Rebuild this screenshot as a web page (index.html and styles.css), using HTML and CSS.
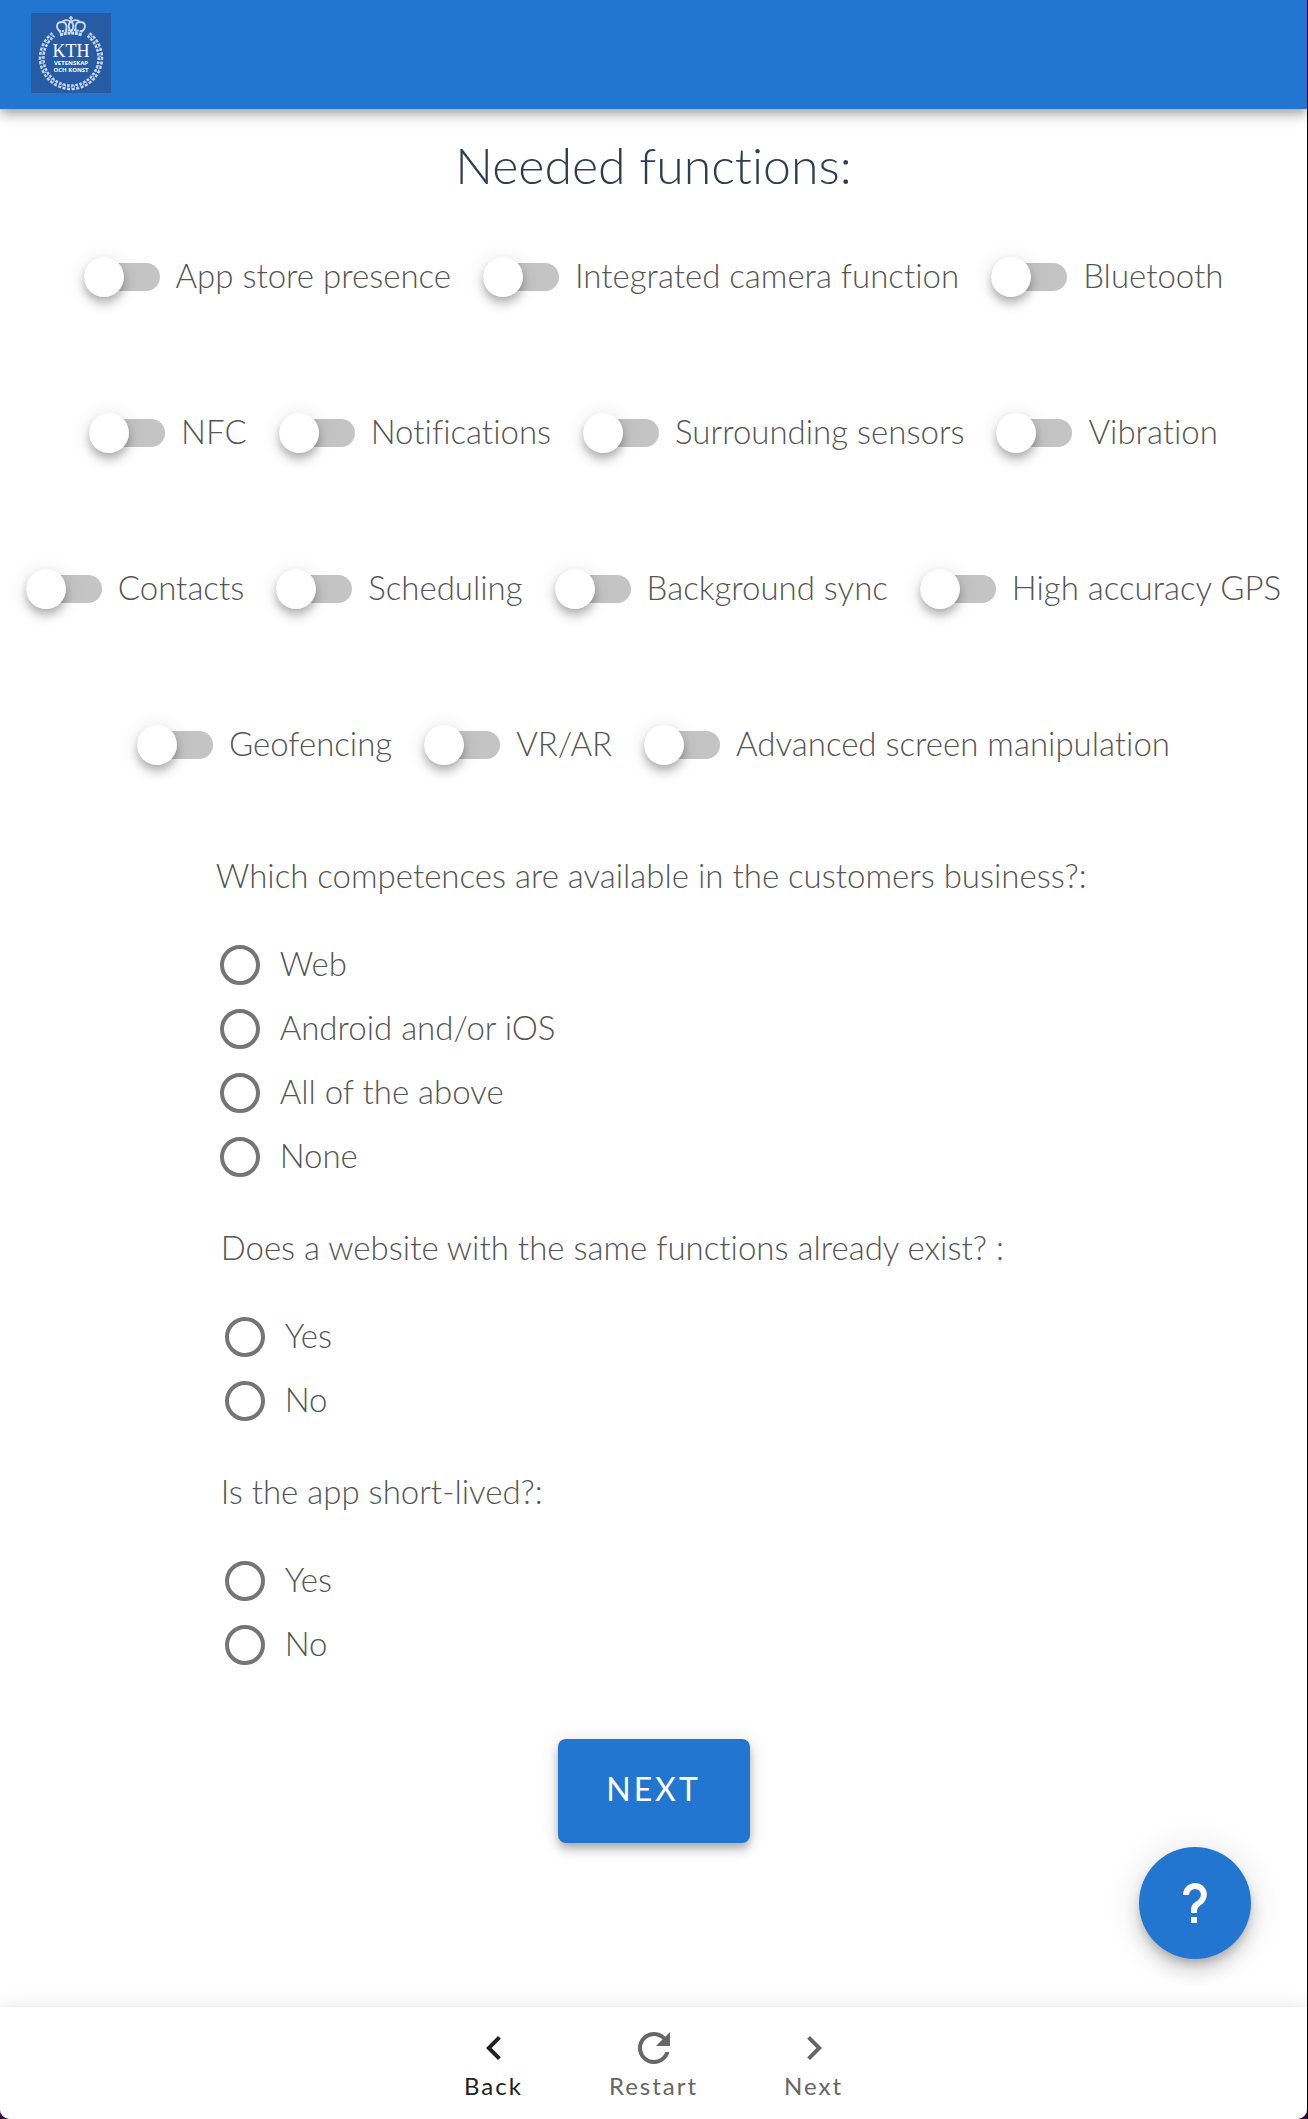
FILE: index.html
```html
<!DOCTYPE html>
<html lang="en">
<head>
  <meta charset="utf-8">
  <meta name="viewport" content="width=device-width, initial-scale=1">
  <title>Needed functions</title>
  <link rel="stylesheet" href="styles.css">
</head>
<body>
  <div class="app">
    <header class="app-bar">
      <a class="logo" href="#" aria-label="KTH home">
        <svg viewBox="0 0 80 80" width="80" height="80" aria-hidden="true">
          <rect width="80" height="80" fill="#275ba4"/>
          <g fill="none" stroke="#c9d9f0">
            <path d="M58.6 20.2A31 31 0 1 1 21.4 20.2" stroke-width="2.400" stroke-dasharray="3 1.6"/>
            <path d="M57.4 21.8A29 29 0 1 1 22.6 21.8" stroke-width="3" stroke-dasharray="1 2.1" stroke="#9db8de"/>
            <path d="M56.5 23A27.500 27.500 0 1 1 23.500 23" stroke-width="2.400" stroke-dasharray="2.600 1.500"/>
            <path d="M40 3v5M38 5h4" stroke-width="1.500"/>
            <path d="M30 19C24 15 25 9 31 9C36 9 36 14 35 19M50 19C56 15 55 9 49 9C44 9 44 14 45 19M40 8C37 11 37 15 40 19C43 15 43 11 40 8M31 9C34 6 38 7 40 9C42 7 46 6 49 9" stroke-width="1.800"/>
            <path d="M28 19Q40 15 52 19" stroke-width="2" stroke-dasharray="2 1"/>
            <path d="M29 22Q40 18 51 22" stroke-width="3" stroke-dasharray="3 .800"/>
          </g>
          <g fill="#fff" text-anchor="middle">
            <text class="logo-name" x="40" y="44">KTH</text>
            <text class="logo-motto" x="40" y="52">VETENSKAP</text>
            <text class="logo-motto" x="40" y="59">OCH KONST</text>
          </g>
        </svg>
      </a>
    </header>

    <main class="content">
      <h1 class="title">Needed functions:</h1>
      <form class="form">
        <div class="switches">
          <div class="switch-row">
            <label class="switch"><input type="checkbox" role="switch" class="switch-input"><span class="label-text">App store presence</span></label>
            <label class="switch"><input type="checkbox" role="switch" class="switch-input"><span class="label-text">Integrated camera function</span></label>
            <label class="switch"><input type="checkbox" role="switch" class="switch-input"><span class="label-text">Bluetooth</span></label>
          </div>
          <div class="switch-row">
            <label class="switch"><input type="checkbox" role="switch" class="switch-input"><span class="label-text">NFC</span></label>
            <label class="switch"><input type="checkbox" role="switch" class="switch-input"><span class="label-text">Notifications</span></label>
            <label class="switch"><input type="checkbox" role="switch" class="switch-input"><span class="label-text">Surrounding sensors</span></label>
            <label class="switch"><input type="checkbox" role="switch" class="switch-input"><span class="label-text">Vibration</span></label>
          </div>
          <div class="switch-row">
            <label class="switch"><input type="checkbox" role="switch" class="switch-input"><span class="label-text">Contacts</span></label>
            <label class="switch"><input type="checkbox" role="switch" class="switch-input"><span class="label-text">Scheduling</span></label>
            <label class="switch"><input type="checkbox" role="switch" class="switch-input"><span class="label-text">Background sync</span></label>
            <label class="switch"><input type="checkbox" role="switch" class="switch-input"><span class="label-text">High accuracy GPS</span></label>
          </div>
          <div class="switch-row">
            <label class="switch"><input type="checkbox" role="switch" class="switch-input"><span class="label-text">Geofencing</span></label>
            <label class="switch"><input type="checkbox" role="switch" class="switch-input"><span class="label-text">VR/AR</span></label>
            <label class="switch"><input type="checkbox" role="switch" class="switch-input"><span class="label-text">Advanced screen manipulation</span></label>
          </div>
        </div>

        <div class="questions">
          <fieldset class="question">
            <legend class="question-title">Which competences are available in the customers business?:</legend>
            <label class="option"><input type="radio" class="radio" name="competence"><span class="label-text">Web</span></label>
            <label class="option"><input type="radio" class="radio" name="competence"><span class="label-text">Android and/or iOS</span></label>
            <label class="option"><input type="radio" class="radio" name="competence"><span class="label-text">All of the above</span></label>
            <label class="option"><input type="radio" class="radio" name="competence"><span class="label-text">None</span></label>
          </fieldset>
          <fieldset class="question question-nested">
            <legend class="question-title">Does a website with the same functions already exist? :</legend>
            <label class="option"><input type="radio" class="radio" name="website"><span class="label-text">Yes</span></label>
            <label class="option"><input type="radio" class="radio" name="website"><span class="label-text">No</span></label>
          </fieldset>
          <fieldset class="question question-nested">
            <legend class="question-title">Is the app short-lived?:</legend>
            <label class="option"><input type="radio" class="radio" name="lifetime"><span class="label-text">Yes</span></label>
            <label class="option"><input type="radio" class="radio" name="lifetime"><span class="label-text">No</span></label>
          </fieldset>
        </div>

        <button class="submit" type="button">NEXT</button>
      </form>
    </main>

    <button class="help" type="button" aria-label="Help">
      <svg class="icon" viewBox="0 0 24 24" aria-hidden="true"><path d="M10,19H13V22H10V19M12,2C17.35,2.22 19.68,7.62 16.5,11.67C15.67,12.67 14.33,13.33 13.67,14.17C13,15 13,16 13,17H10C10,15.33 10,13.92 10.67,12.92C11.33,11.92 12.67,11.33 13.5,10.67C15.92,8.43 15.32,5.26 12,5A3,3 0 0,0 9,8H6A6,6 0 0,1 12,2Z"/></svg>
    </button>

    <nav class="bottom-nav">
      <button class="nav-item nav-item-active" type="button">
        <svg class="icon" viewBox="0 0 24 24" aria-hidden="true"><path d="M15.41,16.58L10.83,12L15.41,7.41L14,6L8,12L14,18L15.41,16.58Z"/></svg>
        Back
      </button>
      <button class="nav-item" type="button">
        <svg class="icon" viewBox="0 0 24 24" aria-hidden="true"><path d="M17.65,6.35C16.2,4.9 14.21,4 12,4A8,8 0 0,0 4,12A8,8 0 0,0 12,20C15.73,20 18.84,17.45 19.73,14H17.65C16.83,16.33 14.61,18 12,18A6,6 0 0,1 6,12A6,6 0 0,1 12,6C13.66,6 15.14,6.69 16.22,7.78L13,11H20V4L17.65,6.35Z"/></svg>
        Restart
      </button>
      <button class="nav-item" type="button">
        <svg class="icon" viewBox="0 0 24 24" aria-hidden="true"><path d="M8.59,16.58L13.17,12L8.59,7.41L10,6L16,12L10,18L8.59,16.58Z"/></svg>
        Next
      </button>
    </nav>
  </div>
</body>
</html>
```
FILE: styles.css
```css
:root {
  --primary: #2376d0;
  --text: #555;
  --raised: 0 4px 8px -2px rgba(0, 0, 0, .2), 0 8px 10px rgba(0, 0, 0, .14), 0 2px 20px rgba(0, 0, 0, .12);
}

* {
  box-sizing: border-box;
}

html {
  background: #3a0d42;
}

body {
  margin: 0;
  border-right: 1px solid #000;
  color: var(--text);
  font: 300 33px/40px Lato, "Open Sans", sans-serif;
  font-variant-ligatures: none;
}

button {
  border: 0;
  font-family: inherit;
  cursor: pointer;
}

.app {
  display: flex;
  flex-direction: column;
  min-height: 100vh;
  overflow: hidden;
  border-radius: 0 0 10px 10px;
  background: #fff;
}

.app-bar {
  display: flex;
  padding: 13px 31px 16px;
  background: var(--primary);
  box-shadow: var(--raised);
}

.logo,
.logo svg {
  display: block;
}

.logo-name {
  font: 18px "Liberation Serif", serif;
}

.logo-motto {
  font: 700 6px "Open Sans", sans-serif;
}

.content {
  flex: 1;
  padding-bottom: 160px;
}

.title {
  margin: 26px 0 52px;
  color: #2c3e50;
  font-size: 50px;
  font-weight: 300;
  line-height: 60px;
  text-align: center;
}

.form {
  display: flex;
  flex-direction: column;
  align-items: center;
}

.switches {
  display: flex;
  flex-direction: column;
  gap: 96px;
  margin-bottom: 80px;
}

.switch-row {
  display: flex;
  flex-wrap: wrap;
  justify-content: center;
  gap: 20px 32px;
  min-height: 60px;
}

.switch {
  display: flex;
  align-items: center;
  gap: 16px;
  cursor: pointer;
}

.label-text {
  padding-bottom: 4px;
}

.switch-input {
  appearance: none;
  display: flex;
  align-items: center;
  width: 76px;
  height: 28px;
  margin: 0;
  border-radius: 14px;
  background: #c4c4c4;
  cursor: pointer;
}

.switch-input::before {
  content: "";
  width: 40px;
  height: 40px;
  border-radius: 50%;
  background: #fff;
  box-shadow: var(--raised);
}

.switch-input:checked {
  justify-content: flex-end;
  background: #91bbe8;
}

.switch-input:checked::before {
  background: var(--primary);
}

.questions {
  display: flex;
  flex-direction: column;
  gap: 38px;
  width: 67%;
  margin-bottom: 62px;
}

.question {
  min-width: 0;
  margin: 0;
  padding: 0;
  border: 0;
}

.question-nested {
  padding-left: 5px;
}

.question-title {
  margin-bottom: 38px;
  padding: 0;
}

.option {
  display: flex;
  align-items: center;
  gap: 20px;
  height: 64px;
  padding-left: 4px;
  cursor: pointer;
}

.radio {
  appearance: none;
  width: 40px;
  height: 40px;
  margin: 0;
  border: 4px solid #757575;
  border-radius: 50%;
  cursor: pointer;
}

.radio:checked {
  border-color: var(--primary);
  background: radial-gradient(var(--primary) 50%, transparent 54%);
}

.submit {
  min-width: 192px;
  height: 104px;
  padding: 0 48px 6px;
  border-radius: 8px;
  background: var(--primary);
  box-shadow: var(--raised);
  color: #fff;
  font-size: 32px;
  font-weight: 400;
  letter-spacing: 3px;
}

.icon {
  width: 48px;
  height: 48px;
  fill: currentColor;
}

.help {
  position: fixed;
  right: 57px;
  bottom: 160px;
  display: flex;
  align-items: center;
  justify-content: center;
  width: 112px;
  height: 112px;
  border-radius: 50%;
  background: var(--primary);
  box-shadow: 0 6px 10px -2px rgba(0, 0, 0, .2), 0 12px 20px rgba(0, 0, 0, .14), 0 2px 36px rgba(0, 0, 0, .12);
  color: #fff;
}

.bottom-nav {
  display: flex;
  justify-content: center;
  background: #fff;
  box-shadow: var(--raised);
}

.nav-item {
  display: flex;
  flex-direction: column;
  align-items: center;
  justify-content: center;
  width: 160px;
  height: 112px;
  padding: 0 0 2px;
  background: none;
  color: #666;
  font-size: 24px;
  line-height: 28px;
  letter-spacing: 2px;
}

.nav-item-active {
  color: #212121;
}
```
